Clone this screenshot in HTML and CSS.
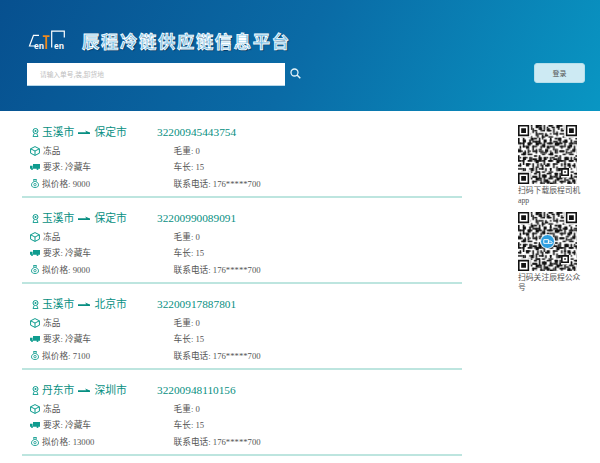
FILE: index.html
```html
<!DOCTYPE html>
<html lang="zh">
<head>
<meta charset="utf-8">
<title>辰程冷链供应链信息平台</title>
<link rel="stylesheet" href="styles.css">
</head>
<body>
<svg class="sprites" width="0" height="0" aria-hidden="true">
  <symbol id="pin" viewBox="0 0 7 9"><circle cx="3.500" cy="3" r="2.500" fill="none" stroke="currentColor" stroke-width="1"/><circle cx="3.500" cy="3" r="1" fill="currentColor"/><path d="M2.200 5.500 1 8.500h5L4.800 5.500" fill="none" stroke="currentColor" stroke-width=".9"/></symbol>
  <symbol id="box" viewBox="0 0 10 10"><path d="M5 .6 9.400 2.800v4.400L5 9.400.6 7.200V2.800zM.6 2.800 5 5l4.400-2.200M5 5v4.400" fill="none" stroke="currentColor" stroke-width="1"/></symbol>
  <symbol id="truck" viewBox="0 0 10 6"><path d="M3 0H10V4.800H3zM0 1.800H2.600V4.800H0z" fill="currentColor"/><circle cx="2" cy="5" r="1" fill="currentColor"/><circle cx="7.500" cy="5" r="1" fill="currentColor"/></symbol>
  <symbol id="bag" viewBox="0 0 8 9"><path d="M2.500.5h3L4.900 2.400H3.100zM3 2.600C1.400 3.300.5 4.500.5 5.900.5 7.700 2 8.500 4 8.500s3.500-.8 3.500-2.600C7.500 4.500 6.600 3.300 5 2.600" fill="none" stroke="currentColor" stroke-width=".9"/><circle cx="4" cy="5.600" r="1.200" fill="none" stroke="currentColor" stroke-width=".8"/></symbol>
  <symbol id="arrow" viewBox="0 0 12 5"><path d="M0 2.300h12V4H0zM7 .4 11.800 2.400H8.500z" fill="currentColor"/></symbol>
  <defs>
    <pattern id="modA" width="13" height="11" patternUnits="userSpaceOnUse">
      <path fill="#111" d="M0 0h2v1H0zM3 0h1v3H3zM6 0h3v1H6zM11 0h2v2h-2zM1 2h1v2H1zM5 2h2v2H5zM9 2h1v3H9zM0 5h3v1H0zM4 5h1v2H4zM7 5h1v1H7zM11 4h1v3h-1zM2 7h2v1H2zM6 7h3v1H6zM0 8h1v3H0zM10 8h2v1h-2zM3 9h2v2H3zM7 9h1v2H7zM9 10h3v1H9z"/>
    </pattern>
    <pattern id="modB" width="17" height="19" patternUnits="userSpaceOnUse">
      <path fill="#111" d="M1 1h1v1H1zM4 1h2v1H4zM8 1h1v2H8zM13 1h2v2h-2zM2 3h2v1H2zM10 3h2v1h-2zM15 3h2v1h-2zM0 6h2v1H0zM5 5h3v1H5zM12 5h1v3h-1zM15 6h1v3h-1zM3 8h1v2H3zM8 8h2v2H8zM1 11h3v1H1zM6 11h2v2H6zM11 10h3v1h-3zM15 12h2v2h-2zM3 13h2v1H3zM9 13h3v1H9zM0 15h2v2H0zM6 15h1v3H6zM13 15h2v1h-2zM3 17h2v2H3zM9 16h3v1H9zM14 17h3v1h-3z"/>
    </pattern>
    <g id="qr-body">
      <rect width="37" height="37" fill="url(#modA)"/>
      <rect width="37" height="37" fill="url(#modB)"/>
      <path fill="#fff" d="M0 0h8v8H0zM29 0h8v8h-8zM0 29h8v8H0zM27 27h6v6h-6z"/>
      <path fill="#111" fill-rule="evenodd" d="M0 0h7v7H0zM1 1v5h5V1zM2 2h3v3H2zM30 0h7v7h-7zM31 1v5h5V1zM32 2h3v3h-3zM0 30h7v7H0zM1 31v5h5v-5zM2 32h3v3H2zM27 27h5v5h-5zM28 28v3h3v-3zM29 29h1v1h-1z"/>
    </g>
  </defs>
</svg>

<header class="top">
  <div class="brand">
    <svg class="logo" viewBox="0 0 40 22">
      <g fill="none" stroke="#fff" stroke-width="1.200">
        <path d="M12 5.300H6.500L2.500 16H9"/>
        <path d="M24.700 17.500V1.200H37.300V7.500"/>
      </g>
      <path d="M15.800 5.200H22.500V7H20.100V19H18.300V7H15.800z" fill="#f08a1c"/>
      <text class="logo-en" x="7" y="19">en</text>
      <text class="logo-en" x="27" y="19">en</text>
    </svg>
    <h1 class="title">辰程冷链供应链信息平台</h1>
  </div>
  <div class="bar">
    <div class="search">
      <div class="input">请输入单号,装,卸货地</div>
      <svg class="lens" viewBox="0 0 11 11"><circle cx="4.500" cy="4.500" r="3.500" fill="none" stroke="#e4f3f8" stroke-width="1.300"/><path d="M7 7l3.300 3.300" stroke="#e4f3f8" stroke-width="1.500"/></svg>
    </div>
    <button class="login">登录</button>
  </div>
</header>

<main class="page">
  <section class="list">
    <article class="order">
      <h2 class="route"><span class="places"><svg class="i-pin"><use href="#pin"/></svg>玉溪市<svg class="i-arrow"><use href="#arrow"/></svg>保定市</span><span class="no">32200945443754</span></h2>
      <div class="facts">
        <div class="fact"><svg class="ic i-box"><use href="#box"/></svg>冻品</div><div class="fact">毛重: 0</div>
        <div class="fact"><svg class="ic i-truck"><use href="#truck"/></svg>要求: 冷藏车</div><div class="fact">车长: 15</div>
        <div class="fact"><svg class="ic i-bag"><use href="#bag"/></svg>拟价格: 9000</div><div class="fact">联系电话: 176*****700</div>
      </div>
    </article>
    <article class="order">
      <h2 class="route"><span class="places"><svg class="i-pin"><use href="#pin"/></svg>玉溪市<svg class="i-arrow"><use href="#arrow"/></svg>保定市</span><span class="no">32200990089091</span></h2>
      <div class="facts">
        <div class="fact"><svg class="ic i-box"><use href="#box"/></svg>冻品</div><div class="fact">毛重: 0</div>
        <div class="fact"><svg class="ic i-truck"><use href="#truck"/></svg>要求: 冷藏车</div><div class="fact">车长: 15</div>
        <div class="fact"><svg class="ic i-bag"><use href="#bag"/></svg>拟价格: 9000</div><div class="fact">联系电话: 176*****700</div>
      </div>
    </article>
    <article class="order">
      <h2 class="route"><span class="places"><svg class="i-pin"><use href="#pin"/></svg>玉溪市<svg class="i-arrow"><use href="#arrow"/></svg>北京市</span><span class="no">32200917887801</span></h2>
      <div class="facts">
        <div class="fact"><svg class="ic i-box"><use href="#box"/></svg>冻品</div><div class="fact">毛重: 0</div>
        <div class="fact"><svg class="ic i-truck"><use href="#truck"/></svg>要求: 冷藏车</div><div class="fact">车长: 15</div>
        <div class="fact"><svg class="ic i-bag"><use href="#bag"/></svg>拟价格: 7100</div><div class="fact">联系电话: 176*****700</div>
      </div>
    </article>
    <article class="order">
      <h2 class="route"><span class="places"><svg class="i-pin"><use href="#pin"/></svg>丹东市<svg class="i-arrow"><use href="#arrow"/></svg>深圳市</span><span class="no">32200948110156</span></h2>
      <div class="facts">
        <div class="fact"><svg class="ic i-box"><use href="#box"/></svg>冻品</div><div class="fact">毛重: 0</div>
        <div class="fact"><svg class="ic i-truck"><use href="#truck"/></svg>要求: 冷藏车</div><div class="fact">车长: 15</div>
        <div class="fact"><svg class="ic i-bag"><use href="#bag"/></svg>拟价格: 13000</div><div class="fact">联系电话: 176*****700</div>
      </div>
    </article>
  </section>

  <aside class="side">
    <figure class="qr">
      <svg class="code" viewBox="0 0 37 37"><use href="#qr-body"/></svg>
      <figcaption class="cap">扫码下载辰程司机app</figcaption>
    </figure>
    <figure class="qr">
      <div class="code-wrap">
        <svg class="code" viewBox="0 0 37 37"><use href="#qr-body"/></svg>
        <span class="badge">
          <svg viewBox="0 0 14 14" class="badge-ic"><path d="M3 5h5v4H3zM8 6.500h2.500L12 8v1H8z" fill="none" stroke="#fff"/></svg>
        </span>
      </div>
      <figcaption class="cap">扫码关注辰程公众号</figcaption>
    </figure>
  </aside>
</main>
</body>
</html>
```

FILE: styles.css
```css
* { box-sizing: border-box; }
html, body { margin: 0; padding: 0; }
body {
  width: 600px;
  height: 463px;
  overflow: hidden;
  background: #fff;
  font-family: "Liberation Serif", "Noto Sans CJK SC", serif;
  color: #555;
}
.sprites { position: absolute; }

.top {
  height: 111px;
  padding: 29px 15px 0 27px;
  background: linear-gradient(118deg, #07508f 0%, #0a6ba6 50%, #0996c3 100%);
}
.brand { display: flex; align-items: center; height: 24px; }
.logo { width: 40px; height: 22px; }
.logo-en { font: 700 8.500px "Liberation Sans", sans-serif; fill: #fff; }
.title {
  margin: 0 0 0 15px;
  font: 700 17.300px/24px "Noto Sans CJK SC", sans-serif;
  color: #6fbde6;
  -webkit-text-stroke: 0.8px #fff;
  text-shadow: 1px 1px 1px #03325a;
  white-space: nowrap;
  letter-spacing: 1.700px;
}
.bar { display: flex; justify-content: space-between; align-items: flex-start; margin-top: 10px; }
.search { display: flex; align-items: center; gap: 5px; }
.input {
  width: 258px;
  height: 23px;
  padding-left: 13px;
  background: #fff;
  border-bottom: 1px solid #b8d8ea;
  font: 6.700px/22px "Noto Sans CJK SC", sans-serif;
  color: #bdbdbd;
}
.lens { width: 11px; height: 11px; margin-top: -3px; }
.login {
  width: 51px;
  height: 20px;
  padding: 0;
  background: #cdeaf3;
  border: 1px solid #b6dfeb;
  border-radius: 3px;
  font: 7px/18px "Noto Sans CJK SC", sans-serif;
  color: #555;
}

.page { display: flex; padding: 1px 15px 0 22px; }
.list { width: 440px; flex: none; }
.order {
  height: 86px;
  padding-top: 12px;
  border-bottom: 2px solid #bde5df;
}
.route {
  display: flex;
  margin: 0;
  height: 16px;
  font-weight: 400;
  font-size: 10.800px;
  line-height: 16px;
  color: #078f82;
}
.places { display: flex; align-items: center; width: 135px; }
.i-pin { width: 7px; height: 9px; margin: 0 3px 0 10px; color: #0f9c8f; }
.i-arrow { width: 12px; height: 5px; margin: 0 4px; color: #078f82; }
.no { font-size: 11.300px; }
.facts {
  display: grid;
  grid-template-columns: 143.500px 1fr;
  grid-auto-rows: 16.300px;
  margin-top: 3px;
  padding-left: 8px;
  font-size: 8.700px;
  line-height: 16.300px;
}
.fact { display: flex; align-items: center; white-space: pre; }
.ic { flex: none; color: #0f9c8f; }
.i-box { width: 10px; height: 10px; margin-right: 3px; }
.i-truck { width: 10px; height: 6px; margin-right: 3px; }
.i-bag { width: 8px; height: 9px; margin: 0 3px 0 1px; }

.side { width: 64px; margin-left: 56px; padding-top: 13px; flex: none; }
.qr { margin: 0 0 6px; }
.code { display: block; width: 59px; height: 59px; filter: blur(.25px); }
.code-wrap { position: relative; width: 59px; }
.badge {
  position: absolute;
  left: 22px;
  top: 22px;
  width: 15px;
  height: 15px;
  border-radius: 50%;
  background: #2f9fe0;
  border: 1px solid #fff;
  display: flex;
}
.badge-ic { width: 13px; height: 13px; }
.cap {
  margin-top: 2px;
  font-size: 7.800px;
  line-height: 10px;
  color: #555;
  word-break: break-all;
}
```
